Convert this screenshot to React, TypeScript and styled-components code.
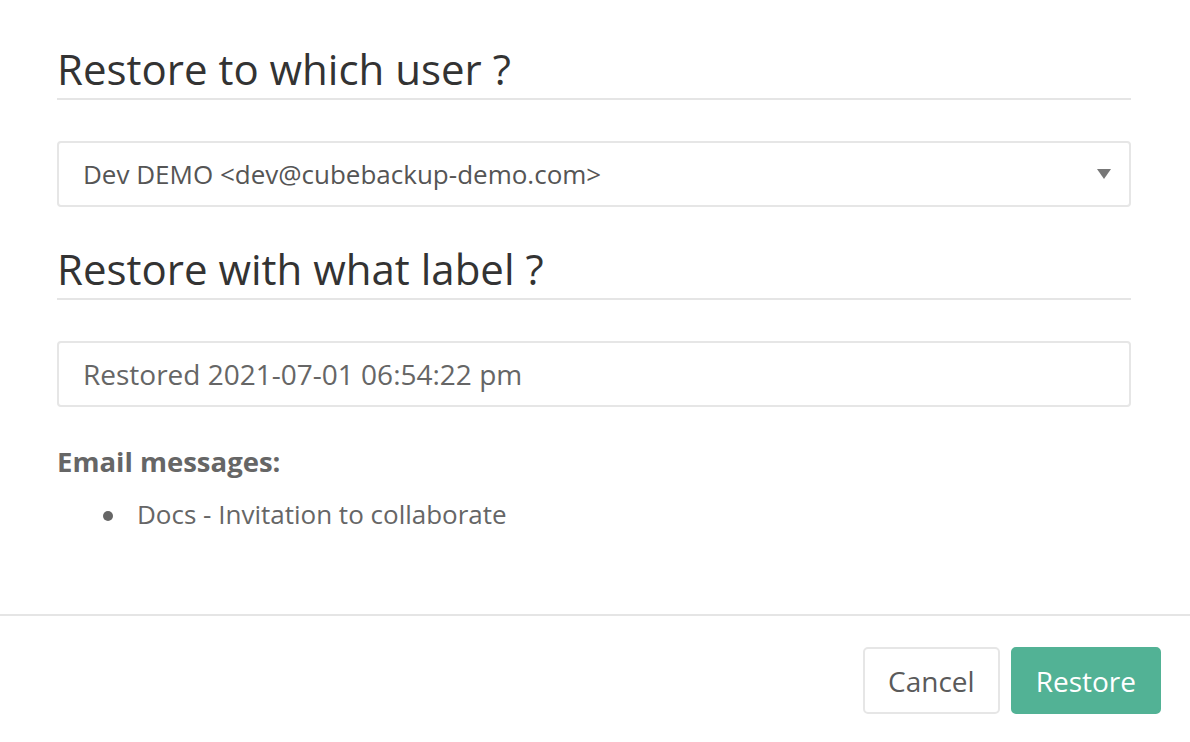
import styled, { createGlobalStyle } from 'styled-components';

const GlobalStyle = createGlobalStyle`
  html, body {
    margin: 0;
    padding: 0;
    background: #fff;
    font-family: "Open Sans", "Liberation Sans", sans-serif;
  }
`;

const Dialog = styled.div`
  width: 1190px;
  height: 742px;
  display: flex;
  flex-direction: column;
  background: #fff;
`;

const Body = styled.div`
  padding: 44px 59px 0 57px;
  flex: 1;
`;

const Heading = styled.h3`
  margin: 0 0 41px;
  padding-bottom: 4px;
  border-bottom: 2px solid #e5e5e5;
  font-size: 42px;
  font-weight: 400;
  line-height: 50px;
  color: #333;
`;

const Field = styled.div`
  height: 66px;
  box-sizing: border-box;
  border: 2px solid #e6e6e6;
  border-radius: 4px;
  display: flex;
  align-items: center;
  padding: 0 24px;
  margin-bottom: 37px;
`;

const FieldText = styled.span<{ $muted?: boolean }>`
  color: ${p => (p.$muted ? '#666' : '#555')};
  font-size: ${p => (p.$muted ? '28px' : '26px')};
  flex: 1;
`;

const Caret = styled.span`
  width: 0;
  height: 0;
  border-left: 7px solid transparent;
  border-right: 7px solid transparent;
  border-top: 10px solid #777;
  margin-right: -6px;
`;

const Label = styled.div`
  font-size: 27.5px;
  font-weight: 700;
  color: #666;
  margin-top: -1px;
`;

const List = styled.ul`
  list-style: none;
  margin: 16px 0 0;
  padding: 0 0 0 46px;
  font-size: 26px;
  color: #666;
`;

const Item = styled.li`
  display: flex;
  align-items: center;
  gap: 24px;
  &::before {
    content: '';
    width: 10px;
    height: 10px;
    border-radius: 50%;
    background: #666;
    margin-top: 3px;
  }
`;

const Footer = styled.div`
  border-top: 2px solid #e5e5e5;
  height: 128px;
  box-sizing: border-box;
  display: flex;
  justify-content: flex-end;
  align-items: flex-start;
  gap: 11px;
  padding: 31px 29px 0 0;
`;

const Button = styled.button<{ $primary?: boolean }>`
  height: 67px;
  box-sizing: border-box;
  padding: 0 23px;
  border-radius: 5px;
  font-family: inherit;
  font-size: 28px;
  border: 2px solid ${p => (p.$primary ? '#52b295' : '#e6e6e6')};
  background: ${p => (p.$primary ? '#52b295' : '#fff')};
  color: ${p => (p.$primary ? '#fff' : '#5a5a5a')};
  cursor: pointer;
`;

export default function App() {
  return (
    <>
      <GlobalStyle />
      <Dialog>
        <Body>
          <Heading>Restore to which user ?</Heading>
          <Field>
            <FieldText>Dev DEMO &lt;dev@cubebackup-demo.com&gt;</FieldText>
            <Caret />
          </Field>
          <Heading>Restore with what label ?</Heading>
          <Field>
            <FieldText $muted>Restored 2021-07-01 06:54:22 pm</FieldText>
          </Field>
          <Label>Email messages:</Label>
          <List>
            <Item>Docs - Invitation to collaborate</Item>
          </List>
        </Body>
        <Footer>
          <Button>Cancel</Button>
          <Button $primary>Restore</Button>
        </Footer>
      </Dialog>
    </>
  );
}
